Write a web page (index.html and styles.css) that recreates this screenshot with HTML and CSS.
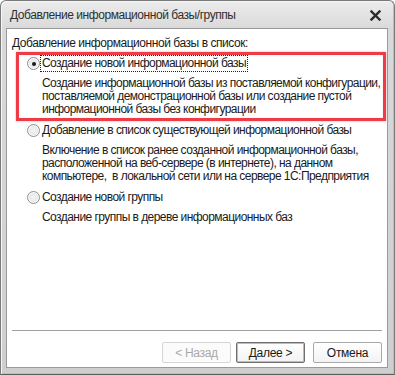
FILE: index.html
```html
<!DOCTYPE html>
<html lang="ru">
<head>
<meta charset="utf-8">
<link rel="stylesheet" href="styles.css">
</head>
<body>
<div class="window">
  <div class="titlebar">
    <span class="title">Добавление информационной базы/группы</span>
    <svg class="close" width="11" height="11" viewBox="0 0 11 11"><path d="M1.5 1.5 L9.5 9.5 M9.5 1.5 L1.5 9.5" stroke="#2b2b2b" stroke-width="2.4" stroke-linecap="square"/></svg>
  </div>
  <div class="client">
    <div class="heading">Добавление информационной базы в список:</div>
    <div class="options">
      <div class="option highlight">
        <div class="row"><span class="radio checked"></span><span class="label focus">Создание новой информационной базы</span></div>
        <div class="desc">Создание информационной базы из поставляемой конфигурации,<br>поставляемой демонстрационной базы или создание пустой<br>информационной базы без конфигурации</div>
      </div>
      <div class="option">
        <div class="row"><span class="radio"></span><span class="label">Добавление в список существующей информационной базы</span></div>
        <div class="desc">Включение в список ранее созданной информационной базы,<br>расположенной на веб-сервере (в интернете), на данном<br>компьютере,&nbsp; в локальной сети или на сервере 1С:Предприятия</div>
      </div>
      <div class="option">
        <div class="row"><span class="radio"></span><span class="label">Создание новой группы</span></div>
        <div class="desc">Создание группы в дереве информационных баз</div>
      </div>
    </div>
    <div class="separator"></div>
    <div class="buttons">
      <button class="btn disabled">&lt; Назад</button>
      <button class="btn default">Далее &gt;</button>
      <button class="btn">Отмена</button>
    </div>
  </div>
</div>
</body>
</html>
```
FILE: styles.css
```css
html, body {
  margin: 0;
  padding: 0;
  background: #ffffff;
}
body {
  font-family: "Liberation Sans", Arial, sans-serif;
  font-size: 12px;
  letter-spacing: -0.55px;
  color: #1a1a1a;
}
.window {
  width: 395px;
  height: 375px;
  box-sizing: border-box;
  border: 1px solid #7a7a7a;
  border-bottom-color: #5e5e5e;
  border-radius: 6px 6px 0 0;
  background: linear-gradient(to bottom, #ececec 0px, #d9d9d9 28px, #cfcfcf 100%);
  box-shadow: inset 1px 1px 0 #f6f6f6, inset -1px -1px 0 #bdbdbd;
  display: flex;
  flex-direction: column;
  padding: 0 6px 6px 5px;
}
.titlebar {
  height: 27px;
  flex: none;
  display: flex;
  align-items: center;
  justify-content: space-between;
  padding: 0 7px 0 4px;
}
.title {
  font-size: 12px;
  letter-spacing: -0.45px;
  color: #2f2f2f;
}
.close {
  display: block;
  margin-top: 1px;
}
.client {
  flex: 1;
  background: #ffffff;
  border: 1px solid #9a9a9a;
  display: flex;
  flex-direction: column;
}
.heading {
  margin: 7px 0 0 5px;
  line-height: 14px;
  height: 14px;
  letter-spacing: -0.45px;
}
.options {
  flex: 1;
  display: flex;
  flex-direction: column;
  gap: 6px;
  padding-top: 5px;
  white-space: nowrap;
}
.highlight {
  position: relative;
}
.highlight::before {
  content: "";
  position: absolute;
  top: -3px;
  bottom: -5px;
  left: 9px;
  right: 1px;
  border: 3px solid #ee3b45;
  box-shadow: 0 0 2px rgba(200, 60, 70, 0.45), inset 0 0 1px rgba(200, 60, 70, 0.35);
  pointer-events: none;
}
.row {
  display: flex;
  align-items: center;
  height: 17px;
  padding-left: 20px;
}
.radio {
  width: 13px;
  height: 13px;
  border: 1px solid #8e8f8f;
  border-radius: 50%;
  background: radial-gradient(circle at 50% 50%, #f4f4f4 0%, #e8e8e8 55%, #d9d9d9 100%);
  box-sizing: border-box;
  position: relative;
  flex: none;
  margin-right: 0;
  box-shadow: inset 0 0 0 1px #ffffff;
}
.radio.checked::after {
  content: "";
  position: absolute;
  left: 3.5px;
  top: 3.5px;
  width: 4px;
  height: 4px;
  border-radius: 50%;
  background: #1a1a1a;
}
.label {
  line-height: 15px;
  padding: 0 1px;
  border: 1px dotted transparent;
}
.label.focus {
  border-color: #222;
}
.desc {
  margin: 5px 0 0 35px;
  line-height: 13px;
}
.separator {
  height: 1px;
  background: #a0a0a0;
  margin: 0 5px 0 5px;
  flex: none;
}
.buttons {
  display: flex;
  justify-content: flex-end;
  gap: 5px;
  padding: 11px 5px 4px 0;
}
.btn {
  width: 69px;
  height: 21px;
  font-family: "Liberation Sans", Arial, sans-serif;
  font-size: 12px;
  letter-spacing: -0.3px;
  color: #1a1a1a;
  background: linear-gradient(to bottom, #ffffff, #f3f3f3);
  border: 1px solid #a9a9a9;
  border-radius: 2px;
  padding: 0;
}
.btn.disabled {
  color: #a8a8a8;
  border-color: #d6d6d6;
  background: #fbfbfb;
}
.btn.default {
  border: 1px solid #6f6f6f;
  box-shadow: inset 0 0 0 1px #bcbcbc;
  margin-right: 3px;
}
```
